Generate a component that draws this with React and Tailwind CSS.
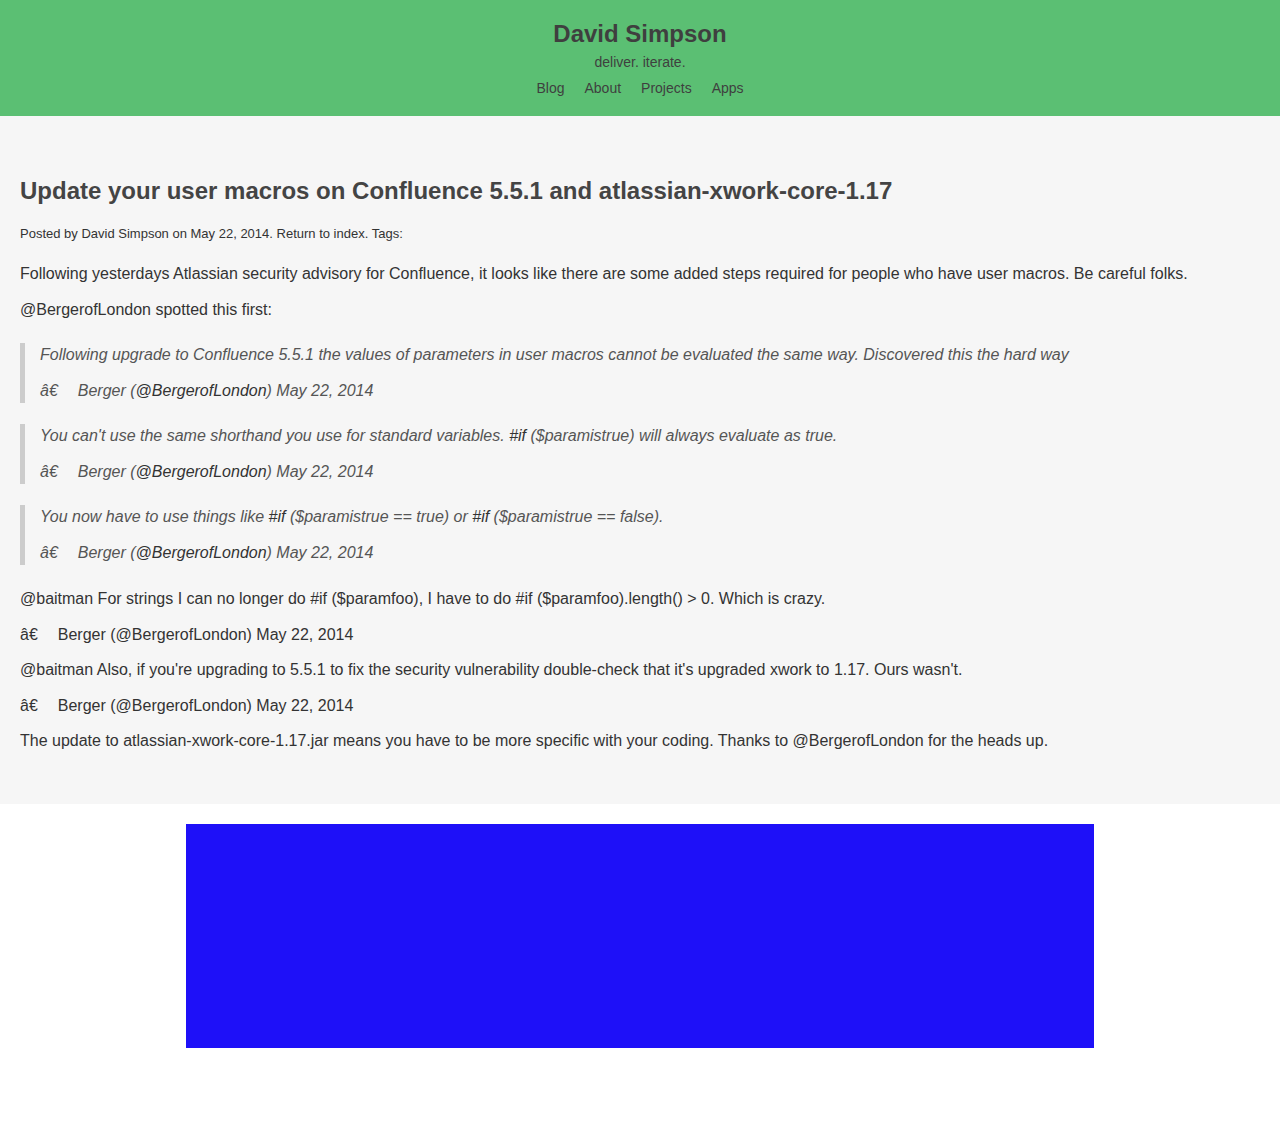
export default function App() {
  const font = { fontFamily: '"Liberation Sans", Arial, Helvetica, sans-serif' };
  const Attr = ({ quote }) => (
    <p className="leading-[24px]">
      â€<span className="inline-block w-[20px]" />Berger (
      <a className={quote ? "text-[#333]" : ""}>@BergerofLondon</a>) May 22, 2014
    </p>
  );
  return (
    <div style={font} className="min-h-[1128px] bg-white text-[#333]">
      <header className="bg-[#5bbf73] text-[#3f3f3f] text-center pt-[20px] pb-[18px]">
        <div className="text-[24px] leading-[28px] font-bold">David Simpson</div>
        <div className="text-[14px] leading-[20px] mt-[4px]">deliver. iterate.</div>
        <nav className="flex justify-center gap-[20px] text-[14px] leading-[20px] mt-[6px]">
          <a>Blog</a>
          <a>About</a>
          <a>Projects</a>
          <a>Apps</a>
        </nav>
      </header>
      <main className="bg-[#f6f6f6] px-[20px] pt-[60px] pb-[51px]">
        <h1 className="text-[24px] leading-[29px] font-bold text-[#444]">
          Update your user macros on Confluence 5.5.1 and atlassian-xwork-core-1.17
        </h1>
        <p className="text-[13px] leading-[20px] mt-[19px]">
          Posted by David Simpson on May 22, 2014. Return to index. Tags:
        </p>
        <div className="text-[16px] leading-[24px]">
          <p className="mt-[18px]">
            Following yesterdays Atlassian security advisory for Confluence, it looks like there are some added steps required for people who have user macros. Be careful folks.
          </p>
          <p className="mt-[12px]">@BergerofLondon spotted this first:</p>
          <div className="flex flex-col gap-[21px] mt-[21px]">
            <blockquote className="border-l-[5px] border-[#ccc] pl-[15px] italic text-[#555] flex flex-col gap-[12px]">
              <p>
                Following upgrade to Confluence 5.5.1 the values of parameters in user macros cannot be evaluated the same way. Discovered this the hard way
              </p>
              <Attr quote />
            </blockquote>
            <blockquote className="border-l-[5px] border-[#ccc] pl-[15px] italic text-[#555] flex flex-col gap-[12px]">
              <p>
                You can't use the same shorthand you use for standard variables. <a className="text-[#333]">#if</a> ($paramistrue) will always evaluate as true.
              </p>
              <Attr quote />
            </blockquote>
            <blockquote className="border-l-[5px] border-[#ccc] pl-[15px] italic text-[#555] flex flex-col gap-[12px]">
              <p>
                You now have to use things like <a className="text-[#333]">#if</a> ($paramistrue == true) or <a className="text-[#333]">#if</a> ($paramistrue == false).
              </p>
              <Attr quote />
            </blockquote>
          </div>
          <div className="flex flex-col gap-[11.5px] mt-[22px]">
            <p>
              @baitman For strings I can no longer do #if ($paramfoo), I have to do #if ($paramfoo).length() &gt; 0. Which is crazy.
            </p>
            <Attr />
            <p>
              @baitman Also, if you're upgrading to 5.5.1 to fix the security vulnerability double-check that it's upgraded xwork to 1.17. Ours wasn't.
            </p>
            <Attr />
            <p>
              The update to atlassian-xwork-core-1.17.jar means you have to be more specific with your coding. Thanks to @BergerofLondon for the heads up.
            </p>
          </div>
        </div>
      </main>
      <div className="flex justify-center pt-[20px]">
        <div className="w-[908px] h-[224px] bg-[#1e10f8]" />
      </div>
    </div>
  );
}
